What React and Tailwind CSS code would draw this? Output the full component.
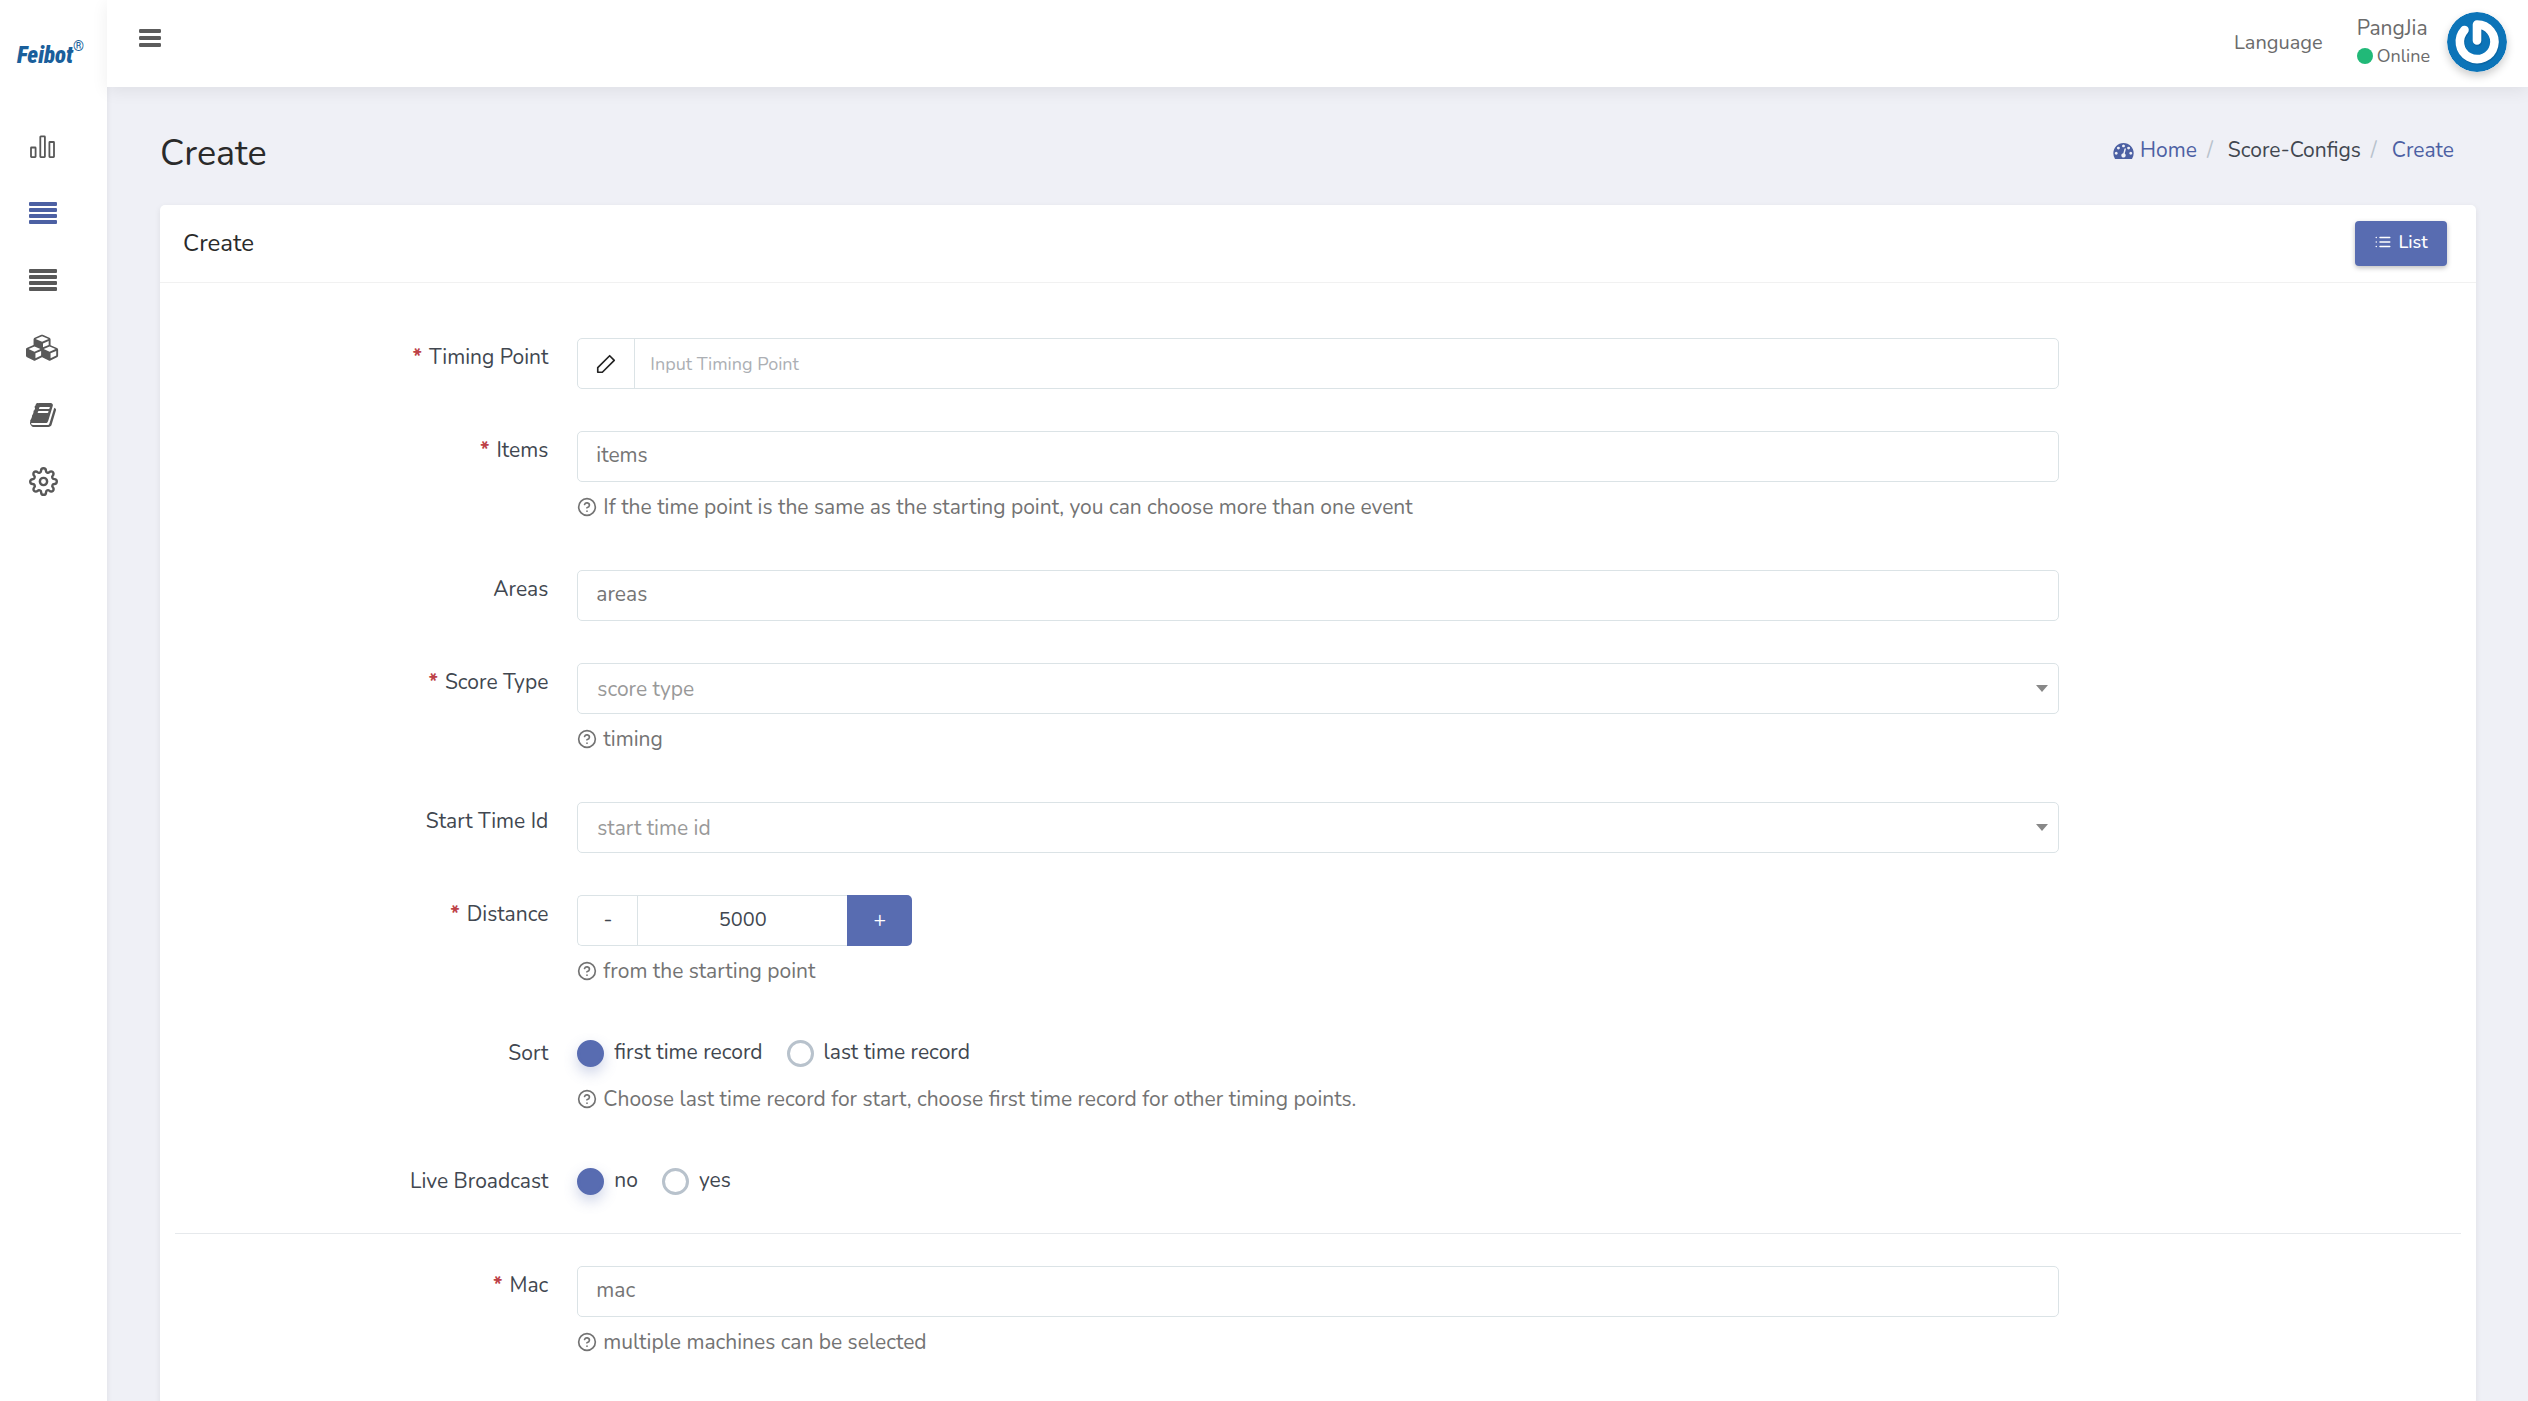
import React, { useState } from 'react';
import { FiSettings, FiHelpCircle, FiList } from 'react-icons/fi';

const Glyph = ({ viewBox, className, d }) => (
  <svg viewBox={viewBox} className={className} fill="currentColor" aria-hidden="true">
    <path d={d} />
  </svg>
);

const bookPath =
  'M1639 478q40 57 18 129l-275 906q-19 64-76.5 107.5T1183 1664H260q-77 0-148.5-53.5T12 1479q-24-67-2-127 0-4 3-27t4-37q1-8-3-21.5t-3-19.5q2-11 8-21t16.500-23.500T52 1179q23-38 45-91.500t30-91.500q3-10 .5-30t-.5-28q3-11 17-28t17-23q21-36 42-92t25-90q1-9-2.500-32t.5-28q4-13 22-30.500t22-22.500q19-26 42.500-84.500T299 411q1-8-3-25.500t-2-26.500q2-8 9-18t18-23 17-21q8-12 16.500-30.500t15-35 16-36 19.500-32T429.500 140t36-11.500T513 134l-1 3q38-9 51-9h761q74 0 114 56t18 130l-274 906q-36 119-71.500 153.500T982 1408H113q-27 0-38 15-11 16-1 43 24 70 144 70h923q29 0 56-15.500t35-41.500l300-987q7-22 5-57 38 15 59 43zm-1064 2q-4 13 2 22.500t20 9.500h608q13 0 25.500-9.500T1247 480l21-64q4-13-2-22.500t-20-9.500H638q-13 0-25.500 9.500T596 416zm-83 256q-4 13 2 22.500t20 9.500h608q13 0 25.500-9.500T1164 736l21-64q4-13-2-22.500t-20-9.500H555q-13 0-25.500 9.500T513 672z';

const cubesPath =
  'M640 1632l384-192v-314l-384 164v342zm-64-454l404-173-404-173-404 173zm1088 454l384-192v-314l-384 164v342zm-64-454l404-173-404-173-404 173zm-448-293l384-165V454l-384 164v267zm-64-379l441-189-441-189-441 189zm1088 518v416q0 36-19 67t-52 47l-448 224q-25 14-57 14t-57-14l-448-224q-4-2-7-4-2 2-7 4l-448 224q-25 14-57 14t-57-14l-448-224q-33-16-52-47t-19-67v-416q0-38 21.5-70t56.5-48l434-186V350q0-38 21.5-70t56.5-48l448-192q23-10 50-10t50 10l448 192q35 16 56.5 48t21.5 70v400l434 186q36 16 57 48t21 70z';

const gaugePath =
  'M384 1152q0-53-37.5-90.5T256 1024t-90.5 37.5T128 1152t37.5 90.5T256 1280t90.5-37.5T384 1152zm192-448q0-53-37.5-90.5T448 576t-90.5 37.5T320 704t37.5 90.5T448 832t90.5-37.5T576 704zm428 481l101-382q6-26-7.5-48.5T1059 725t-48 6.5-30 39.5l-101 382q-60 5-107 43.5t-63 98.5q-20 77 20 146t117 89 146-20 89-117q16-60-6-117t-72-91zm660-33q0-53-37.5-90.5T1536 1024t-90.5 37.5-37.5 90.5 37.5 90.5 90.5 37.5 90.5-37.5 37.5-90.5zm-640-640q0-53-37.5-90.5T896 384t-90.5 37.5T768 512t37.5 90.5T896 640t90.5-37.5T1024 512zm448 192q0-53-37.5-90.5T1344 576t-90.5 37.5T1216 704t37.5 90.5T1344 832t90.5-37.5T1472 704zm320 448q0 261-141 483-19 29-54 29H195q-35 0-54-29Q0 1414 0 1152q0-182 71-348t191-286 286-191 348-71 348 71 286 191 191 286 71 348z';

const ChartIcon = () => (
  <svg width="28" height="24" viewBox="0 0 28 24" fill="none" stroke="currentColor" strokeWidth="1.8" aria-hidden="true">
    <rect x="2" y="12.5" width="4.6" height="9.6" rx="0.5" />
    <rect x="11.3" y="1.4" width="4.6" height="20.7" rx="0.5" />
    <rect x="20.4" y="7" width="4.6" height="15.1" rx="0.5" />
  </svg>
);

const JustifyIcon = () => (
  <svg width="28" height="24" viewBox="0 0 28 24" fill="currentColor" aria-hidden="true">
    <rect y="0" width="28" height="4" rx="1" />
    <rect y="6" width="28" height="4" rx="1" />
    <rect y="12" width="28" height="4" rx="1" />
    <rect y="18" width="28" height="4" rx="1" />
  </svg>
);

const PencilIcon = () => (
  <svg width="22" height="22" viewBox="0 0 24 24" fill="none" stroke="currentColor" strokeWidth="1.8" strokeLinejoin="round" aria-hidden="true">
    <polygon points="16 3 21 8 8 21 3 21 3 16 16 3" />
  </svg>
);

const Avatar = () => (
  <svg viewBox="0 0 60 60" className="size-[60px] rounded-full shadow-[0_4px_8px_rgba(0,0,0,0.2)]" role="img" aria-label="PangJia">
    <circle cx="30" cy="30" r="30" fill="#0c74b8" />
    <g fill="none" stroke="#085a94" strokeOpacity="0.5" strokeWidth="9" strokeLinecap="round" transform="translate(0.8 1.2)">
      <path d="M30 28.500V12.500A17.300 17.300 0 1 1 17.500 18" />
    </g>
    <path d="M30 28.500V12.500A17.300 17.300 0 1 1 17.500 18" fill="none" stroke="#fff" strokeWidth="8.600" strokeLinecap="round" strokeLinejoin="round" />
  </svg>
);

const menu = [
  { name: 'Dashboard', icon: <ChartIcon /> },
  { name: 'Score configs', icon: <JustifyIcon />, active: true },
  { name: 'Records', icon: <JustifyIcon /> },
  { name: 'Devices', icon: <Glyph viewBox="0 0 2304 1792" className="w-[34px] h-[27px]" d={cubesPath} /> },
  { name: 'Docs', icon: <Glyph viewBox="0 0 1664 1792" className="w-[26px] h-[28px]" d={bookPath} /> },
  { name: 'Settings', icon: <FiSettings className="size-[29px]" /> },
];

const Help = ({ children }) => (
  <p className="flex items-center gap-[6px] mt-[10px] pb-[6px] leading-[30px] text-[#737373]">
    <FiHelpCircle className="size-5 shrink-0" />
    {children}
  </p>
);

const Row = ({ label, htmlFor, required, help, children }) => {
  const Label = htmlFor ? 'label' : 'span';
  return (
    <div className="grid grid-cols-12 pb-[42px]">
      <Label
        htmlFor={htmlFor}
        id={htmlFor ? undefined : label.replace(' ', '-')}
        className="col-span-2 pr-[15px] pt-1 leading-[30px] text-right text-[#414750]"
      >
        {required && <span className="mr-[7px] font-bold text-[#bd4147]">*</span>}
        {label}
      </Label>
      <div className="col-span-8 px-[14px]">
        {children}
        {help && <Help>{help}</Help>}
      </div>
    </div>
  );
};

const TagInput = ({ id }) => (
  <input
    id={id}
    placeholder={id}
    className="block w-full h-[51px] px-[18px] pb-1 rounded-[5px] border border-[#dbe3e6] outline-none placeholder:text-[#757575]"
  />
);

const Select = ({ id, placeholder }) => (
  <div className="relative">
    <select
      id={id}
      defaultValue=""
      className="block w-full h-[51px] pl-[19px] pr-10 pt-[2px] appearance-none rounded-[5px] border border-[#dbe3e6] bg-white text-[#999] outline-none"
    >
      <option value="">{placeholder}</option>
    </select>
    <svg className="absolute right-[11px] top-[22px] pointer-events-none" width="12" height="7" viewBox="0 0 12 7" fill="#888" aria-hidden="true">
      <path d="M0 0h12L6 7z" />
    </svg>
  </div>
);

const RadioGroup = ({ name, options, labelledBy }) => {
  const [value, setValue] = useState(options[0]);
  return (
    <div role="radiogroup" aria-labelledby={labelledBy} className="flex items-center gap-6 h-10 pb-[2px]">
      {options.map((option) => (
        <label key={option} className="flex items-center gap-[10px] text-[#414750]">
          <input
            type="radio"
            name={name}
            checked={value === option}
            onChange={() => setValue(option)}
            className="size-[27px] appearance-none rounded-full border-[3px] border-[#b8c2cc] checked:border-[#586cb1] checked:bg-[#586cb1] checked:shadow-[0_6px_14px_rgba(88,108,177,0.3)]"
          />
          {option}
        </label>
      ))}
    </div>
  );
};

const Sidebar = () => (
  <aside className="w-[107px] shrink-0 bg-white shadow-[0_0_6px_rgba(0,0,0,0.08)]">
    <a href="#" className="flex items-start pl-[17px] pt-10 h-[134px] font-['Roboto_Condensed','Archivo_Narrow','Liberation_Sans',sans-serif] text-[#1a5f9b]">
      <span className="text-[23px] leading-[32px] font-black italic">Feibot</span>
      <span className="text-[14px] leading-3">®</span>
    </a>
    <nav className="flex flex-col">
      {menu.map((item) => (
        <a
          key={item.name}
          href="#"
          aria-label={item.name}
          className={`flex items-center justify-center h-[67px] -mt-[21px] mb-[21px] pr-[21px] ${item.active ? 'text-[#4c60a3]' : 'text-[#585858]'}`}
        >
          {item.icon}
        </a>
      ))}
    </nav>
  </aside>
);

const Topbar = () => (
  <header className="flex items-center justify-between h-[87px] pl-8 pr-[21px] pb-[3px] bg-white text-[#6b6b6b] shadow-[0_4px_16px_rgba(0,0,0,0.07)]">
    <button type="button" aria-label="Toggle menu" className="pb-2 text-[#5c5c5c]">
      <svg width="22" height="18" viewBox="0 0 22 18" fill="currentColor">
        <rect width="22" height="4" rx="1.2" />
        <rect y="7" width="22" height="4" rx="1.2" />
        <rect y="14" width="22" height="4" rx="1.2" />
      </svg>
    </button>
    <div className="flex items-center">
      <a href="#" className="mr-[34px] pt-[2px] text-[20px]">Language</a>
      <div className="mr-[17px]">
        <p className="text-[21px] leading-7">PangJia</p>
        <p className="flex items-center gap-1 text-[18px] leading-7">
          <span className="size-4 rounded-full bg-[#21b978]" />
          Online
        </p>
      </div>
      <Avatar />
    </div>
  </header>
);

const App = () => {
  const [distance, setDistance] = useState(5000);

  return (
    <div className="flex min-h-screen bg-[#eff0f6] font-[Nunito,Lato,sans-serif] text-[21px] text-[#414750]">
      <Sidebar />
      <div className="flex-1 min-w-0">
        <Topbar />
        <main className="px-[52px] pl-[53px]">
          <div className="flex items-center justify-between h-[118px] pr-[22px] pt-4">
            <h1 className="text-[36px] text-[#2a2a2a]">Create</h1>
            <nav aria-label="Breadcrumb" className="flex items-center mb-[6px] text-[21px] text-[#4c60a3]">
              <a href="#" className="flex items-center gap-[6px]">
                <Glyph viewBox="0 256 1792 1408" className="w-[21px] h-[16px]" d={gaugePath} />
                Home
              </a>
              <span className="ml-[10px] mr-[15px] text-[#b8c2cc]">/</span>
              <span className="text-[#414750]">Score-Configs</span>
              <span className="ml-[10px] mr-[15px] text-[#b8c2cc]">/</span>
              <a href="#">Create</a>
            </nav>
          </div>

          <section className="rounded-[5px] bg-white shadow-[0_2px_6px_rgba(0,0,0,0.08)]">
            <div className="flex items-center justify-between h-[78px] pl-[23px] pr-[29px] border-b border-[#f1f1f1]">
              <h2 className="pb-[2px] text-[24px] text-[#2a2a2a]">Create</h2>
              <a
                href="#"
                className="flex items-center justify-center gap-[6px] w-[92px] h-[45px] pb-[3px] rounded-[4px] bg-[#586cb1] text-[18px] font-medium text-white shadow-[0_2px_5px_rgba(0,0,0,0.25)]"
              >
                <FiList className="size-[18px]" />
                List
              </a>
            </div>

            <form className="pt-[55px]" onSubmit={(e) => e.preventDefault()}>
              <div className="px-[26px]">
                <Row label="Timing Point" htmlFor="timing" required>
                  <div className="flex h-[51px] rounded-[5px] border border-[#dbe3e6]">
                    <span className="flex items-center justify-center w-[57px] border-r border-[#dbe3e6] text-[#222]">
                      <PencilIcon />
                    </span>
                    <input
                      id="timing"
                      placeholder="Input Timing Point"
                      className="flex-1 px-[15px] pt-[2px] text-[18px] outline-none placeholder:text-[#acafb4]"
                    />
                  </div>
                </Row>
                <Row
                  label="Items"
                  htmlFor="items"
                  required
                  help="If the time point is the same as the starting point, you can choose more than one event"
                >
                  <TagInput id="items" />
                </Row>
                <Row label="Areas" htmlFor="areas">
                  <TagInput id="areas" />
                </Row>
                <Row label="Score Type" htmlFor="score-type" required help="timing">
                  <Select id="score-type" placeholder="score type" />
                </Row>
                <Row label="Start Time Id" htmlFor="start-time">
                  <Select id="start-time" placeholder="start time id" />
                </Row>
                <Row label="Distance" htmlFor="distance" required help="from the starting point">
                  <div className="flex w-[335px] h-[51px]">
                    <button
                      type="button"
                      onClick={() => setDistance(distance - 1)}
                      className="w-[60px] rounded-l-[5px] border border-r-0 border-[#dbe3e6]"
                    >
                      -
                    </button>
                    <input
                      id="distance"
                      value={distance}
                      onChange={(e) => setDistance(Number(e.target.value) || 0)}
                      className="flex-1 min-w-0 pb-[2px] border border-r-0 border-[#dbe3e6] text-center text-[20px] outline-none"
                    />
                    <button
                      type="button"
                      onClick={() => setDistance(distance + 1)}
                      className="w-[65px] rounded-r-[5px] bg-[#586cb1] text-white"
                    >
                      +
                    </button>
                  </div>
                </Row>
                <Row label="Sort" help="Choose last time record for start, choose first time record for other timing points.">
                  <RadioGroup name="sort" labelledBy="Sort" options={['first time record', 'last time record']} />
                </Row>
                <Row label="Live Broadcast">
                  <RadioGroup name="live" labelledBy="Live-Broadcast" options={['no', 'yes']} />
                </Row>
              </div>
              <hr className="-mt-[11px] mx-[15px] mb-8 border-[#e6e9ec]" />
              <div className="px-[26px]">
                <Row label="Mac" htmlFor="mac" required help="multiple machines can be selected">
                  <TagInput id="mac" />
                </Row>
              </div>
            </form>
          </section>
        </main>
      </div>
    </div>
  );
};

export default App;
